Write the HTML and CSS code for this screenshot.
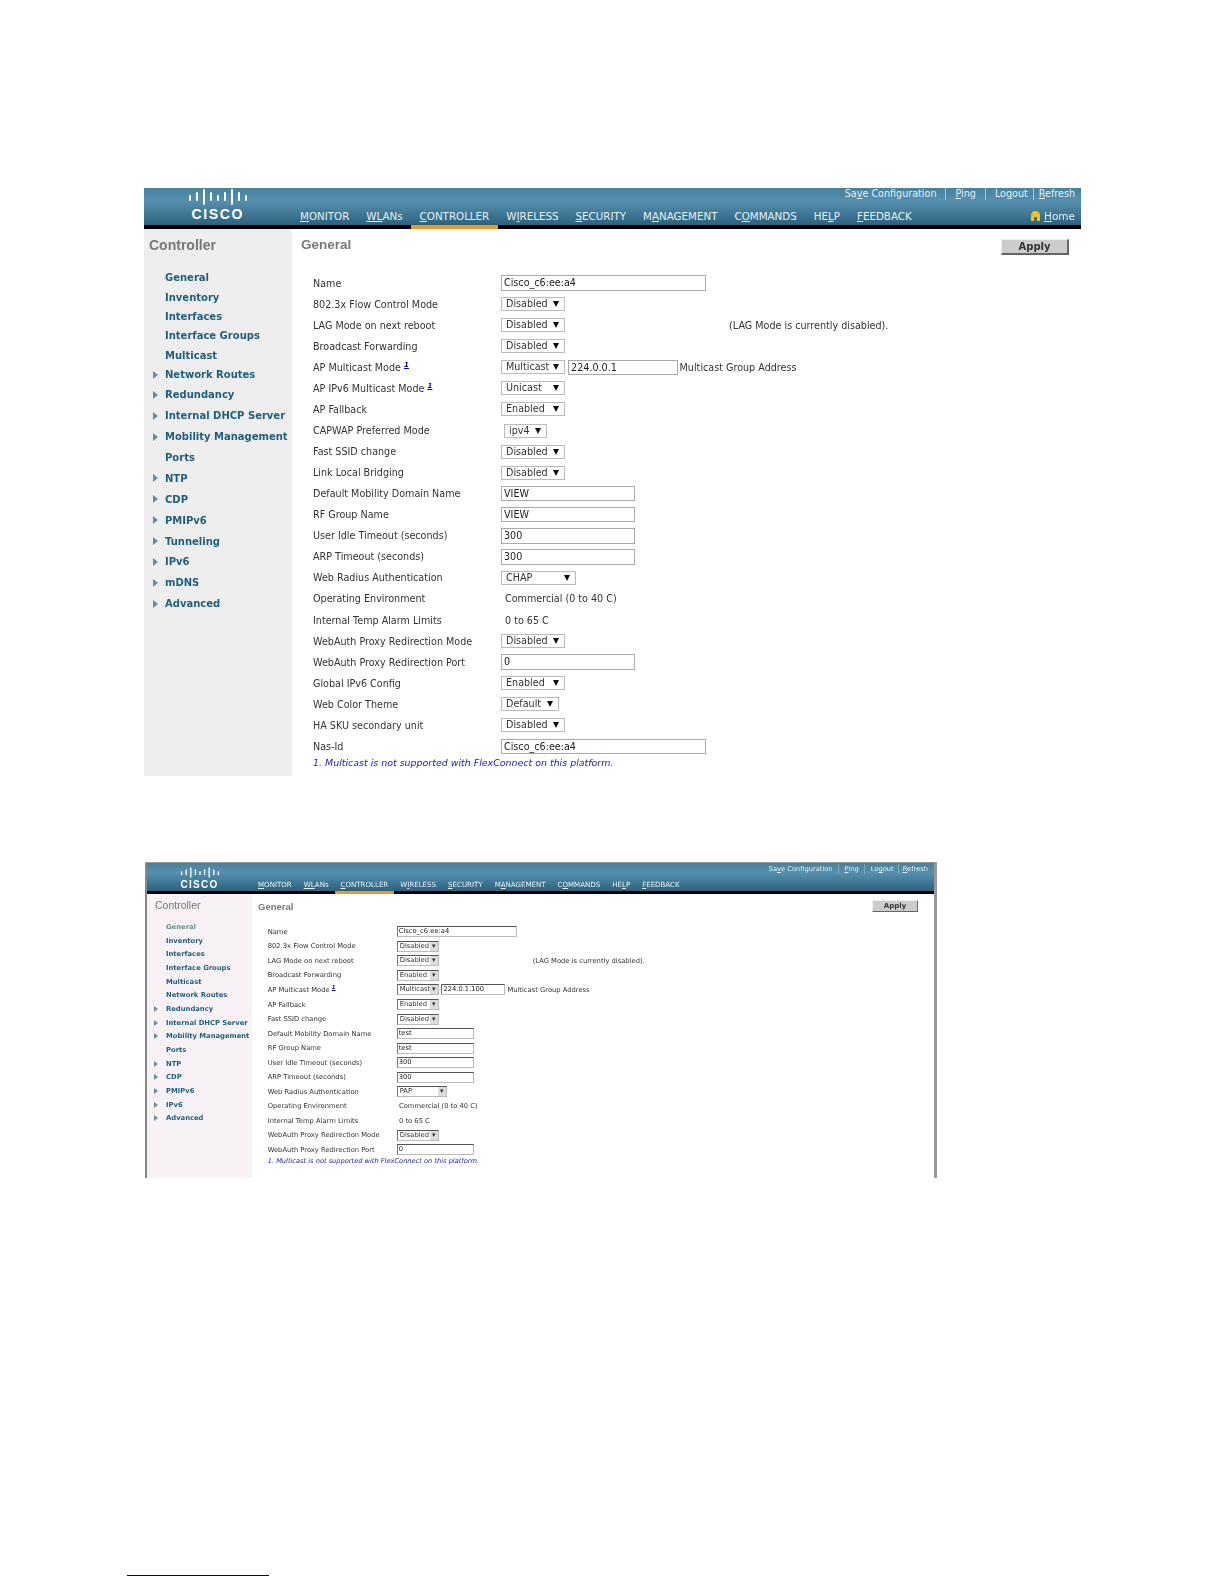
FILE: index.html
```html
<!DOCTYPE html>
<html lang="en">
<head>
  <meta charset="UTF-8">
  <title>Controller General</title>
  <link rel="stylesheet" href="styles.css">
</head>
<body>

  <!-- Figure 1 -->
  <div class="shot big">
    <div class="head">
      <div class="logo">
        <svg viewBox="0 0 58 16"><path d="M1 7v4M8 4v7M15 1v14M22 4v7M29 7v4M36 4v7M43 1v14M50 4v7M57 7v4"/></svg>
        <div class="cisco">CISCO</div>
      </div>
      <div class="menus">
        <div class="links">
          <a>Sa<u>v</u>e Configuration</a><a><u>P</u>ing</a><a>Lo<u>g</u>out</a><a><u>R</u>efresh</a>
        </div>
        <div class="tabs">
          <a><u>M</u>ONITOR</a>
          <a><u>WL</u>ANs</a>
          <a class="on"><u>C</u>ONTROLLER</a>
          <a>W<u>I</u>RELESS</a>
          <a><u>S</u>ECURITY</a>
          <a>M<u>A</u>NAGEMENT</a>
          <a>C<u>O</u>MMANDS</a>
          <a>HE<u>L</u>P</a>
          <a><u>F</u>EEDBACK</a>
          <div class="home">
            <svg viewBox="0 0 9 10"><path d="M0 10V4a4.5 4 0 0 1 9 0v6H6V6H3v4z"/></svg>
            <span><u>H</u>ome</span>
          </div>
        </div>
      </div>
    </div>
    <div class="main">
      <div class="side">
        <div class="title">Controller</div>
        <ul>
          <li>General</li>
          <li>Inventory</li>
          <li>Interfaces</li>
          <li>Interface Groups</li>
          <li>Multicast</li>
          <li class="arrow">Network Routes</li>
          <li class="arrow tall">Redundancy</li>
          <li class="arrow tall">Internal DHCP Server</li>
          <li class="arrow tall">Mobility Management</li>
          <li class="tall">Ports</li>
          <li class="arrow tall">NTP</li>
          <li class="arrow tall">CDP</li>
          <li class="arrow tall">PMIPv6</li>
          <li class="arrow tall">Tunneling</li>
          <li class="arrow tall">IPv6</li>
          <li class="arrow tall">mDNS</li>
          <li class="arrow tall">Advanced</li>
        </ul>
      </div>
      <div class="content">
        <div class="content-top">
          <div class="title">General</div>
          <button class="apply">Apply</button>
        </div>
        <div class="form">
          <div class="row"><label>Name</label><div><span class="field long">Cisco_c6:ee:a4</span></div></div>
          <div class="row"><label>802.3x Flow Control Mode</label><div><span class="sel">Disabled</span></div></div>
          <div class="row"><label>LAG Mode on next reboot</label><div><span class="sel">Disabled</span><span class="lag">(LAG Mode is currently disabled).</span></div></div>
          <div class="row"><label>Broadcast Forwarding</label><div><span class="sel">Disabled</span></div></div>
          <div class="row"><label>AP Multicast Mode <sup>1</sup></label><div><span class="sel">Multicast</span><span class="field addr">224.0.0.1</span><span class="addr-note">Multicast Group Address</span></div></div>
          <div class="row"><label>AP IPv6 Multicast Mode <sup>1</sup></label><div><span class="sel">Unicast</span></div></div>
          <div class="row"><label>AP Fallback</label><div><span class="sel">Enabled</span></div></div>
          <div class="row"><label>CAPWAP Preferred Mode</label><div><span class="sel ipv">ipv4</span></div></div>
          <div class="row"><label>Fast SSID change</label><div><span class="sel">Disabled</span></div></div>
          <div class="row"><label>Link Local Bridging</label><div><span class="sel">Disabled</span></div></div>
          <div class="row"><label>Default Mobility Domain Name</label><div><span class="field mid">VIEW</span></div></div>
          <div class="row"><label>RF Group Name</label><div><span class="field mid">VIEW</span></div></div>
          <div class="row"><label>User Idle Timeout (seconds)</label><div><span class="field mid">300</span></div></div>
          <div class="row"><label>ARP Timeout (seconds)</label><div><span class="field mid">300</span></div></div>
          <div class="row"><label>Web Radius Authentication</label><div><span class="sel wide">CHAP</span></div></div>
          <div class="row"><label>Operating Environment</label><div class="plain">Commercial (0 to 40 C)</div></div>
          <div class="row"><label>Internal Temp Alarm Limits</label><div class="plain">0 to 65 C</div></div>
          <div class="row"><label>WebAuth Proxy Redirection Mode</label><div><span class="sel">Disabled</span></div></div>
          <div class="row"><label>WebAuth Proxy Redirection Port</label><div><span class="field mid">0</span></div></div>
          <div class="row"><label>Global IPv6 Config</label><div><span class="sel">Enabled</span></div></div>
          <div class="row"><label>Web Color Theme</label><div><span class="sel theme">Default</span></div></div>
          <div class="row"><label>HA SKU secondary unit</label><div><span class="sel">Disabled</span></div></div>
          <div class="row"><label>Nas-Id</label><div><span class="field long">Cisco_c6:ee:a4</span></div></div>
          <div class="note">1. Multicast is not supported with FlexConnect on this platform.</div>
        </div>
      </div>
    </div>
  </div>

  <!-- Figure 2 -->
  <div class="shot small">
    <div class="head">
      <div class="logo">
        <svg viewBox="0 0 58 16"><path d="M1 7v4M8 4v7M15 1v14M22 4v7M29 7v4M36 4v7M43 1v14M50 4v7M57 7v4"/></svg>
        <div class="cisco">CISCO</div>
      </div>
      <div class="menus">
        <div class="links">
          <a>Sa<u>v</u>e Configuration</a><a><u>P</u>ing</a><a>Lo<u>g</u>out</a><a><u>R</u>efresh</a>
        </div>
        <div class="tabs">
          <a><u>M</u>ONITOR</a>
          <a><u>WL</u>ANs</a>
          <a class="on"><u>C</u>ONTROLLER</a>
          <a>W<u>I</u>RELESS</a>
          <a><u>S</u>ECURITY</a>
          <a>M<u>A</u>NAGEMENT</a>
          <a>C<u>O</u>MMANDS</a>
          <a>HE<u>L</u>P</a>
          <a><u>F</u>EEDBACK</a>
        </div>
      </div>
    </div>
    <div class="main">
      <div class="side">
        <div class="title">Controller</div>
        <ul>
          <li class="current">General</li>
          <li>Inventory</li>
          <li>Interfaces</li>
          <li>Interface Groups</li>
          <li>Multicast</li>
          <li>Network Routes</li>
          <li class="arrow">Redundancy</li>
          <li class="arrow">Internal DHCP Server</li>
          <li class="arrow">Mobility Management</li>
          <li>Ports</li>
          <li class="arrow">NTP</li>
          <li class="arrow">CDP</li>
          <li class="arrow">PMIPv6</li>
          <li class="arrow">IPv6</li>
          <li class="arrow">Advanced</li>
        </ul>
      </div>
      <div class="content">
        <div class="content-top">
          <div class="title">General</div>
          <button class="apply">Apply</button>
        </div>
        <div class="form">
          <div class="row"><label>Name</label><div><span class="field long">Cisco_c6:ee:a4</span></div></div>
          <div class="row"><label>802.3x Flow Control Mode</label><div><span class="sel">Disabled</span></div></div>
          <div class="row"><label>LAG Mode on next reboot</label><div><span class="sel">Disabled</span><span class="lag">(LAG Mode is currently disabled).</span></div></div>
          <div class="row"><label>Broadcast Forwarding</label><div><span class="sel">Enabled</span></div></div>
          <div class="row"><label>AP Multicast Mode <sup>1</sup></label><div><span class="sel">Multicast</span><span class="field addr">224.0.1.100</span><span class="addr-note">Multicast Group Address</span></div></div>
          <div class="row"><label>AP Fallback</label><div><span class="sel">Enabled</span></div></div>
          <div class="row"><label>Fast SSID change</label><div><span class="sel">Disabled</span></div></div>
          <div class="row"><label>Default Mobility Domain Name</label><div><span class="field mid">test</span></div></div>
          <div class="row"><label>RF Group Name</label><div><span class="field mid">test</span></div></div>
          <div class="row"><label>User Idle Timeout (seconds)</label><div><span class="field mid">300</span></div></div>
          <div class="row"><label>ARP Timeout (seconds)</label><div><span class="field mid">300</span></div></div>
          <div class="row"><label>Web Radius Authentication</label><div><span class="sel wide">PAP</span></div></div>
          <div class="row"><label>Operating Environment</label><div class="plain">Commercial (0 to 40 C)</div></div>
          <div class="row"><label>Internal Temp Alarm Limits</label><div class="plain">0 to 65 C</div></div>
          <div class="row"><label>WebAuth Proxy Redirection Mode</label><div><span class="sel">Disabled</span></div></div>
          <div class="row"><label>WebAuth Proxy Redirection Port</label><div><span class="field mid">0</span></div></div>
          <div class="note">1. Multicast is not supported with FlexConnect on this platform.</div>
        </div>
      </div>
    </div>
  </div>

  <div class="foot-rule"></div>

</body>
</html>
```

FILE: styles.css
```css
body {
  margin: 0;
  background: #fff;
  color: #333;
  font-family: "DejaVu Sans", sans-serif;
}

.shot {
  box-sizing: border-box;
}

.head {
  box-sizing: border-box;
  display: flex;
  background: linear-gradient(#47829f, #5690ae 35%, #2c627e);
  border-bottom: solid #000;
  color: #e6eff4;
}

.logo {
  flex: none;
  display: flex;
  flex-direction: column;
  align-items: center;
}
.logo svg {
  display: block;
  fill: none;
  stroke: #fff;
  stroke-linecap: round;
}
.cisco {
  color: #fff;
  font-family: "Liberation Sans", sans-serif;
  font-weight: bold;
}

.menus {
  flex: 1;
  display: flex;
  flex-direction: column;
  justify-content: space-between;
}

.links {
  display: flex;
  justify-content: flex-end;
}
.links a + a {
  border-left: 1px solid #a9c6d5;
}

.tabs {
  display: flex;
  align-items: flex-end;
}
.tabs a {
  border-bottom: solid transparent;
}
.tabs a.on {
  border-bottom-color: #ee9a22;
}
.home {
  margin-left: auto;
  display: flex;
  align-items: center;
}
.home svg {
  fill: #f2c21d;
}

.main {
  display: flex;
}

.side .title,
.content .title {
  color: #777;
  font-family: "Liberation Sans", sans-serif;
  font-weight: bold;
}

.side ul {
  list-style: none;
  margin: 0;
  padding: 0;
}
.side li {
  position: relative;
  display: flex;
  align-items: center;
  color: #1f5f7c;
  font-weight: bold;
  white-space: nowrap;
}
.side li.arrow::before {
  content: "";
  position: absolute;
  top: 50%;
  border-left: solid #64909f;
  border-top: solid transparent;
  border-bottom: solid transparent;
}
.side li.current {
  color: #6d8f8c;
}

.content {
  flex: 1;
}
.content-top {
  display: flex;
  justify-content: space-between;
}
.apply {
  padding: 0;
  background: #ccc;
  border: solid;
  border-color: #eee #666 #666 #eee;
  color: #333;
  font-family: "DejaVu Sans", sans-serif;
  font-weight: bold;
}

.row {
  display: grid;
  align-items: center;
}
.row > div {
  display: flex;
  align-items: center;
  white-space: nowrap;
}
.row label {
  white-space: nowrap;
}
sup {
  color: #00c;
  font-style: italic;
  font-weight: bold;
  text-decoration: underline;
  line-height: 0;
}

.field {
  box-sizing: border-box;
  display: block;
  flex: none;
  background: #fff;
  color: #222;
}

.sel {
  box-sizing: border-box;
  position: relative;
  display: block;
  flex: none;
  background: #fff;
}

.lag,
.addr-note {
  color: #333;
}

.note {
  color: #1a1ab0;
  font-style: italic;
  white-space: nowrap;
}

/* Figure 1 sizes */
.big {
  width: 937px;
  height: 588px;
  margin: 188px 0 0 144px;
  filter: blur(0.2px);
}
.big .head {
  height: 41px;
  border-bottom-width: 4px;
}
.big .logo {
  width: 147.5px;
}
.big .logo svg {
  width: 58px;
  height: 16px;
  margin-top: 1px;
  stroke-width: 2;
}
.big .cisco {
  font-size: 14px;
  letter-spacing: 1.6px;
  line-height: 18px;
}
.big .links {
  font-size: 9.6px;
  line-height: 12px;
  padding: 0 6px 0 0;
}
.big .links a {
  padding: 0 9px;
}
.big .links a:nth-child(3) {
  padding-right: 5px;
}
.big .links a:last-child {
  padding: 0 0 0 5px;
}
.big .tabs {
  font-size: 10.3px;
  margin-bottom: -4px;
  padding-right: 6px;
}
.big .tabs a {
  padding: 0 8.5px 1px;
  line-height: 16px;
  border-bottom-width: 4px;
}
.big .home {
  gap: 4px;
  font-size: 10.5px;
  line-height: 16px;
  padding-bottom: 5px;
}
.big .home svg {
  width: 9px;
  height: 10px;
}
.big .main {
  height: 547px;
}
.big .side {
  width: 148px;
  background: #eee;
}
.big .side .title {
  font-size: 14px;
  line-height: 16px;
  padding: 8px 0 0 5px;
}
.big .side ul {
  margin-top: 15px;
}
.big .side li {
  height: 19.4px;
  padding-left: 21px;
  font-size: 10px;
}
.big .side li.tall {
  height: 20.9px;
}
.big .side li.arrow::before {
  left: 9px;
  margin-top: -4px;
  border-width: 4px 5px;
  border-right-width: 0;
}
.big .content-top {
  height: 43.5px;
  padding: 8px 12px 0 9px;
  box-sizing: border-box;
}
.big .content .title {
  font-size: 13.5px;
  line-height: 16px;
}
.big .apply {
  width: 68px;
  height: 16px;
  margin-top: 2px;
  border-width: 1px 2px 2px 1px;
  font-size: 10px;
  line-height: 12px;
}
.big .form {
  padding-left: 21px;
  font-size: 9.6px;
}
.big .row {
  grid-template-columns: 188px auto;
  height: 21.07px;
}
.big sup {
  font-size: 7px;
}
.big .field {
  height: 15.5px;
  padding: 0 2px;
  border: 1px solid #aaa;
  line-height: 13px;
}
.big .field.long {
  width: 205px;
}
.big .field.mid {
  width: 134px;
}
.big .field.addr {
  width: 110px;
  margin-left: 3.5px;
}
.big .addr-note {
  margin-left: 1.5px;
}
.big .lag {
  margin-left: 164.5px;
}
.big .sel {
  width: 63.6px;
  height: 14px;
  padding-left: 4px;
  border: 1px solid #bbb;
  line-height: 12px;
}
.big .sel::after {
  content: "";
  position: absolute;
  right: 5px;
  top: 3px;
  border-top: 6px solid #111;
  border-left: 3px solid transparent;
  border-right: 3px solid transparent;
}
.big .sel.wide {
  width: 75px;
}
.big .sel.theme {
  width: 58px;
}
.big .sel.ipv {
  width: 43px;
  margin-left: 3px;
  margin-top: 2px;
}
.big .plain {
  padding-left: 4px;
}
.big .note {
  font-size: 9.45px;
  line-height: 11px;
}

/* Figure 2 sizes */
.small {
  width: 792px;
  height: 316px;
  margin: 86px 0 0 145px;
  border-left: 2px solid #888;
  border-right: 3px solid #999;
  border-top: 1px solid #999;
  filter: blur(0.35px);
}
.small .head {
  height: 31px;
  border-bottom-width: 3px;
}
.small .logo {
  width: 105px;
}
.small .logo svg {
  width: 38px;
  height: 11px;
  margin-top: 4px;
  stroke-width: 2;
}
.small .cisco {
  font-size: 10px;
  letter-spacing: 1.3px;
  line-height: 13px;
}
.small .links {
  font-size: 6.7px;
  line-height: 10px;
  padding: 1px 6px 0 0;
}
.small .links a {
  padding: 0 5.5px;
  border-left-color: #7fa8bd;
}
.small .links a:nth-child(3) {
  padding-right: 4px;
}
.small .links a:last-child {
  padding: 0 0 0 4px;
}
.small .tabs {
  font-size: 7.05px;
  margin-bottom: -3px;
}
.small .tabs a {
  padding: 0 6px;
  line-height: 12px;
  border-bottom-width: 3px;
}
.small .main {
  height: 284px;
}
.small .side {
  width: 105px;
  background: #f8f2f7;
}
.small .side .title {
  font-size: 10.5px;
  font-weight: normal;
  line-height: 12px;
  padding: 5px 0 0 8px;
}
.small .side ul {
  margin-top: 9px;
}
.small .side li {
  height: 13.7px;
  padding-left: 19px;
  font-size: 6.8px;
}
.small .side li.arrow::before {
  left: 7px;
  margin-top: -3px;
  border-width: 3px 4px;
  border-right-width: 0;
}
.small .content-top {
  height: 30.5px;
  padding: 7px 16px 0 6px;
  box-sizing: border-box;
}
.small .content .title {
  font-size: 9.5px;
  line-height: 12px;
}
.small .apply {
  width: 46px;
  height: 12px;
  margin-top: -1px;
  border-width: 1px;
  font-size: 7px;
  line-height: 9px;
}
.small .form {
  padding-left: 15.7px;
  font-size: 6.75px;
}
.small .row {
  grid-template-columns: 129px auto;
  height: 14.55px;
}
.small sup {
  font-size: 5.5px;
}
.small .field {
  height: 11px;
  padding: 0 1px;
  border: 1px solid #bbb;
  border-top-color: #555;
  border-left-color: #777;
  line-height: 9px;
}
.small .field.long {
  width: 120px;
}
.small .field.mid {
  width: 77.5px;
}
.small .field.addr {
  width: 64px;
  margin-left: 2.7px;
}
.small .addr-note {
  margin-left: 2px;
}
.small .lag {
  margin-left: 94px;
}
.small .sel {
  width: 42px;
  height: 11px;
  padding-left: 2px;
  border: 1px solid #bbb;
  border-top-color: #555;
  border-left-color: #777;
  line-height: 9px;
}
.small .sel::after {
  content: "\25BE";
  position: absolute;
  right: 0;
  top: 0;
  width: 8px;
  height: 9px;
  background: #ddd;
  color: #333;
  font-size: 7px;
  line-height: 9px;
  text-align: center;
}
.small .sel.wide {
  width: 50px;
}
.small .plain {
  padding-left: 2.3px;
}
.small .note {
  font-size: 6.65px;
  line-height: 9px;
}

.foot-rule {
  width: 142px;
  height: 1px;
  margin: 397px 0 0 127px;
  background: #00008b;
}
```
